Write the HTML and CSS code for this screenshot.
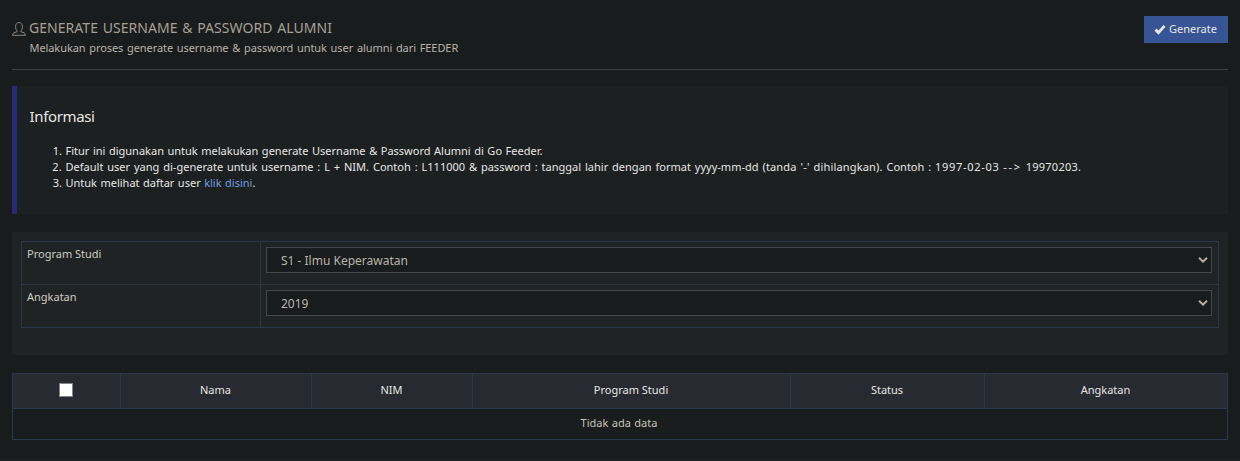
FILE: index.html
```
<!DOCTYPE html>
<html lang="id">
<head>
<meta charset="utf-8">
<title>Generate Username &amp; Password Alumni</title>
<link rel="stylesheet" href="styles.css">
</head>
<body>
<main class="page">
  <header class="header">
    <svg class="user-icon" viewBox="0 0 14 14" width="14" height="14"><path d="M5.2 8.9C4.1 8 3.6 6.600 3.600 4.500C3.600 2 4.900.6 7 .6S10.400 2 10.400 4.500C10.400 6.600 9.900 8 8.800 8.900V9.700L12 10.700Q13.400 11.300 13.400 13.300H.6Q.6 11.300 2 10.700L5.200 9.700Z"/></svg>
    <div class="heading">
      <h1 class="title">GENERATE USERNAME &amp; PASSWORD ALUMNI</h1>
      <p class="subtitle">Melakukan proses generate username &amp; password untuk user alumni dari FEEDER</p>
    </div>
    <button class="generate" type="button">
      <svg class="check-icon" viewBox="0 0 12 11" width="12" height="11"><path d="M1.500 5.600L4.500 8.600L10.500 1.900"/></svg>
      <span class="generate-label">Generate</span>
    </button>
  </header>

  <section class="info">
    <h2 class="info-title">Informasi</h2>
    <ol class="info-list">
      <li class="item-first">Fitur ini digunakan untuk melakukan generate Username &amp; Password Alumni di Go Feeder.</li>
      <li class="item-second">Default user yang di-generate untuk username : L + NIM. Contoh : L111000 &amp; password : tanggal lahir dengan format yyyy-mm-dd <span class="note">(tanda '-' dihilangkan).</span> Contoh : <span class="date">1997-02-03</span> <span class="arrow">--&gt;</span> <span class="digits">19970203.</span></li>
      <li class="item-third">Untuk melihat daftar user <a class="link" href="#">klik disini</a>.</li>
    </ol>
  </section>

  <section class="filter">
    <table class="filter-table">
      <colgroup><col class="col-label"><col></colgroup>
      <tr>
        <td>Program Studi</td>
        <td><div class="select"><span class="value">S1 - Ilmu Keperawatan</span><svg class="chevron" viewBox="0 0 10 6" width="10" height="6"><path d="M1 .8L5 4.600L9 .8"/></svg></div></td>
      </tr>
      <tr>
        <td>Angkatan</td>
        <td><div class="select"><span class="value">2019</span><svg class="chevron" viewBox="0 0 10 6" width="10" height="6"><path d="M1 .8L5 4.600L9 .8"/></svg></div></td>
      </tr>
    </table>
  </section>

  <table class="data-table">
    <colgroup><col class="col-check"><col class="col-name"><col class="col-nim"><col class="col-program"><col class="col-status"><col class="col-year"></colgroup>
    <thead>
      <tr>
        <th><span class="checkbox" role="checkbox" aria-checked="false"></span></th>
        <th>Nama</th>
        <th>NIM</th>
        <th>Program Studi</th>
        <th>Status</th>
        <th>Angkatan</th>
      </tr>
    </thead>
    <tbody><tr><td class="empty" colspan="6">Tidak ada data</td></tr></tbody>
  </table>
  <div class="footer-line"></div>
</main>
</body>
</html>
```
FILE: styles.css
```
* { box-sizing: border-box; }
body {
  margin: 0;
  background: #181c1d;
  color: #c8c3ba;
  font-family: "Noto Sans", "Open Sans", sans-serif;
  font-size: 11px;
  line-height: 16px;
}
.page { height: 461px; padding: 16px 12px 0; display: flex; flex-direction: column; overflow: hidden; }
.header { display: flex; align-items: flex-start; height: 54px; border-bottom: 1px solid #3c4041; }
.user-icon { margin: 6px 4px 0 0; flex: none; }
.user-icon path { fill: none; stroke: #8f887c; stroke-width: 1; }
.heading { flex: 1; white-space: nowrap; }
.title { margin: 2px 0 0 -1px; font-size: 14px; line-height: 20px; font-weight: 400; letter-spacing: .05px; word-spacing: 1px; color: #a8a095; }
.subtitle { margin: 2px 0 0 -.5px; word-spacing: 1px; letter-spacing: -.08px; color: #b8b2a8; }
.generate {
  display: flex; align-items: center; gap: 3px;
  width: 84px; height: 27px; padding: 0 0 1px 10px;
  border: 0; background: #375495; color: #e8e6e3;
  font: inherit;
}
.check-icon path { fill: none; stroke: #e8e6e3; stroke-width: 2.9; }

.info { height: 128px; margin-top: 16px; padding: 20px 0 0 12.500px; border-left: 5px solid #29297a; background: #1c2021; color: #e8e6e3; }
.info-title { margin: 0; font-size: 15px; line-height: 20px; font-weight: 400; letter-spacing: -.35px; }
.info-list { margin: 17px 0 0; padding-left: 36px; white-space: nowrap; word-spacing: 1px; }
.item-first { word-spacing: .7px; }
.item-second { letter-spacing: .01px; }
.note { letter-spacing: .16px; }
.date { letter-spacing: .7px; }
.arrow { letter-spacing: 1.700px; }
.digits { letter-spacing: .25px; }
.item-third { word-spacing: .6px; }
.link { color: #6f9fe0; text-decoration: none; }

.filter { height: 123px; margin-top: 18px; padding: 9px; background: #1f2323; }
.filter-table, .data-table { border-collapse: collapse; table-layout: fixed; }
.filter-table { width: 1198px; }
.col-label { width: 239px; }
.filter-table td { height: 43px; padding: 5px 6px 0 5px; vertical-align: top; border: 1px solid #2b364b; color: #d0ccc4; }
.filter-table td:first-child { padding-top: 4px; }
.select {
  display: flex; align-items: center; justify-content: space-between;
  height: 26px; padding: 0 3px 0 14px;
  border: 1px solid #45484a; background: #181c1d; color: #b9b4a9; font-size: 12px;
}
.value { padding-top: 2px; }
.chevron path { fill: none; stroke: #b5afa3; stroke-width: 2; }

.data-table { width: 1216px; margin-top: 18px; }
.col-check { width: 108px; } .col-name { width: 191px; } .col-nim { width: 161px; }
.col-program { width: 318px; } .col-status { width: 194px; } .col-year { width: 243px; }
.data-table th, .data-table td { padding: 0 1px 2px 0; text-align: center; vertical-align: middle; border: 1px solid #2b364b; font-weight: 400; }
.data-table th { height: 35px; background: #272a31; color: #e8e6e3; }
.data-table td { height: 31px; background: #1a1d1e; }
.data-table .empty { word-spacing: .6px; padding-right: 2px; }
.checkbox { display: block; width: 14px; height: 14px; margin: 0 auto; background: #fff; border: 1px solid #858585; }
.footer-line { height: 1px; margin: 19px -12px 0; background: #212427; }
```
